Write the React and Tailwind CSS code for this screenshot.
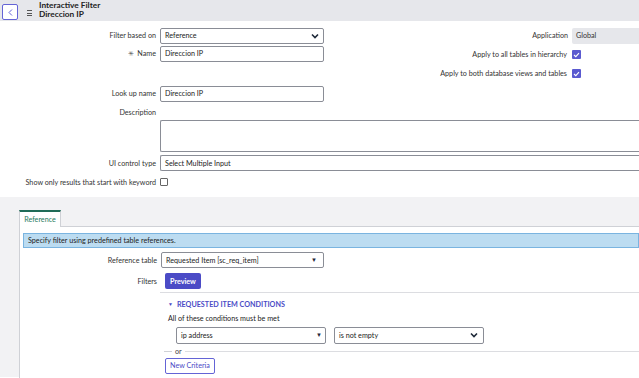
import React from "react";

const font = { fontFamily: "Lato, 'Open Sans', sans-serif" };

function Caret() {
  return <span className="text-[6px] text-gray-800">▼</span>;
}

function Chevron() {
  return (
    <svg width="8" height="6" viewBox="0 0 8 6" className="text-gray-800">
      <path d="M1 1.5 L4 4.5 L7 1.5" fill="none" stroke="currentColor" strokeWidth="1.6" />
    </svg>
  );
}

function Check() {
  return (
    <span className="w-[9px] h-[9px] bg-[#5a5ad0] rounded-[1px] flex items-center justify-center">
      <svg width="7" height="6" viewBox="0 0 7 6">
        <path d="M1 3 L2.8 4.7 L6 1.2" fill="none" stroke="white" strokeWidth="1.1" />
      </svg>
    </span>
  );
}

function Label({ children, w = "w-[156px]" }) {
  return <div className={`${w} shrink-0 text-right text-[#333]`}>{children}</div>;
}

function Box({ children, className = "" }) {
  return (
    <div
      className={`h-[16px] border border-[#8a8d96] rounded-[2px] bg-white flex items-center px-[4px] text-[#222] ${className}`}
    >
      {children}
    </div>
  );
}

export default function App() {
  return (
    <div className="w-[639px] h-[378px] overflow-hidden bg-white text-[7.2px] leading-none" style={font}>
      {/* header */}
      <div className="h-[21px] bg-[#e6e7eb] flex items-start pt-[4px]">
        <div className="ml-[2px] w-[16px] h-[16px] border border-[#6464d6] rounded-[2px] bg-white flex items-center justify-center">
          <svg width="5" height="7" viewBox="0 0 5 7">
            <path d="M4 0.5 L1 3.5 L4 6.5" fill="none" stroke="#6464d6" strokeWidth="1" />
          </svg>
        </div>
        <div className="ml-[9px] mt-[6px] flex flex-col gap-[1.5px]">
          <span className="w-[5px] h-[1px] bg-[#555]" />
          <span className="w-[5px] h-[1px] bg-[#555]" />
          <span className="w-[5px] h-[1px] bg-[#555]" />
        </div>
        <div className="ml-[7px] -mt-[3px] font-bold text-[#222] text-[8.3px] leading-[9px]">
          <div>Interactive Filter</div>
          <div>Direccion IP</div>
        </div>
      </div>

      {/* form */}
      <div className="pt-[7px]">
        <div className="flex">
          <div className="w-[330px]">
            <div className="flex items-center gap-[4px]">
              <Label>Filter based on</Label>
              <Box className="w-[164px] justify-between">
                <span>Reference</span>
                <Chevron />
              </Box>
            </div>
            <div className="flex items-center gap-[4px] mt-[2px]">
              <Label>
                <span className="text-[#555] mr-[3px]">✳</span>Name
              </Label>
              <Box className="w-[164px]">Direccion IP</Box>
            </div>
          </div>
          <div className="flex-1 flex flex-col items-end">
            <div className="flex items-center gap-[4px] w-full justify-end">
              <span className="text-[#333]">Application</span>
              <div className="w-[67px] h-[16px] bg-[#e6e7eb] rounded-l-[2px] flex items-center px-[4px] text-[#333]">
                Global
              </div>
            </div>
            <div className="flex items-center gap-[5px] mt-[6px] pr-[58px]">
              <span className="text-[#333]">Apply to all tables in hierarchy</span>
              <Check />
            </div>
            <div className="flex items-center gap-[5px] mt-[10px] pr-[58px]">
              <span className="text-[#333]">Apply to both database views and tables</span>
              <Check />
            </div>
          </div>
        </div>

        <div className="flex items-center gap-[4px] mt-[8px]">
          <Label>Look up name</Label>
          <Box className="w-[164px]">Direccion IP</Box>
        </div>
        <div className="flex items-center gap-[4px] mt-[7px]">
          <Label>Description</Label>
        </div>
        <div className="flex gap-[4px] mt-[4px]">
          <div className="w-[156px]" />
          <div className="flex-1 h-[32px] border border-[#8a8d96] border-r-0 rounded-l-[2px]" />
        </div>
        <div className="flex items-center gap-[4px] mt-[3px]">
          <Label>UI control type</Label>
          <Box className="flex-1 border-r-0 rounded-r-none">Select Multiple Input</Box>
        </div>
        <div className="flex items-center gap-[4px] mt-[7px]">
          <Label>Show only results that start with keyword</Label>
          <span className="w-[8px] h-[8px] border border-[#666] rounded-[1px] bg-white" />
        </div>
      </div>

      {/* lower area */}
      <div className="mt-[11px] bg-[#f2f2f4] h-[180px] pt-[13px] pl-[19px]">
        <div className="flex items-end">
          <div className="w-[42px] h-[17px] bg-white border-t-2 border-t-[#1f6b57] border-x border-x-[#cfd1d6] flex items-center justify-center text-[#1f7a5c]">
            Reference
          </div>
          <div className="flex-1 border-b border-[#cfd1d6]" />
        </div>
        <div className="bg-white border-l border-[#cfd1d6] h-[160px] pt-[6px] pl-[3px]">
          <div className="h-[15px] bg-[#bcdcf1] border border-[#7ab4e0] flex items-center pl-[4px] text-[#222]">
            Specify filter using predefined table references.
          </div>
          <div className="flex items-center gap-[4px] mt-[4px] -ml-[3px]">
            <Label w="w-[137px]">Reference table</Label>
            <Box className="w-[163px] justify-between pr-[6px]">
              <span>Requested Item [sc_req_item]</span>
              <Caret />
            </Box>
          </div>
          <div className="flex items-center gap-[8px] mt-[5px] -ml-[3px]">
            <Label w="w-[137px]">Filters</Label>
            <div className="h-[16px] px-[5px] bg-[#4b4bc6] rounded-[2px] text-white font-bold flex items-center">
              Preview
            </div>
          </div>
          <div className="ml-[137px] mt-[3px] border-t border-[#dcdde1] pt-[8px] pl-[8px]">
            <div className="flex items-center gap-[4px] text-[#4b4bc6] font-bold">
              <span className="text-[5px]">▼</span>
              <span>REQUESTED ITEM CONDITIONS</span>
            </div>
            <div className="mt-[7px] text-[#222]">All of these conditions must be met</div>
            <div className="flex gap-[8px] mt-[4px] ml-[8px]">
              <Box className="w-[150px] h-[17px] justify-between pr-[3px]">
                <span>ip address</span>
                <Caret />
              </Box>
              <Box className="w-[150px] h-[17px] justify-between pr-[5px]">
                <span>is not empty</span>
                <Chevron />
              </Box>
            </div>
            <div className="flex items-center -ml-[4px] mt-[4px]">
              <div className="w-[8px] border-t border-[#cfd1d6]" />
              <span className="px-[3px] text-[#444]">or</span>
              <div className="flex-1 border-t border-[#dcdde1]" />
            </div>
            <div className="-ml-[3px] mt-[3px] inline-flex h-[16px] px-[4px] border border-[#6464d6] rounded-[2px] items-center text-[#4b4bc6]">
              New Criteria
            </div>
          </div>
        </div>
      </div>
    </div>
  );
}
